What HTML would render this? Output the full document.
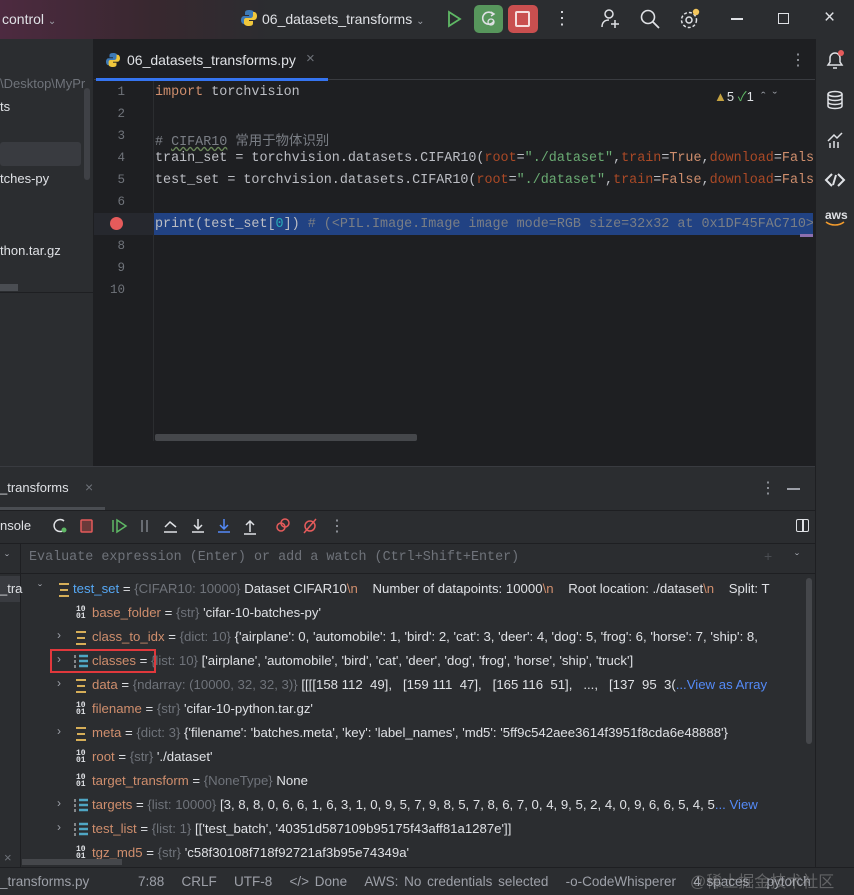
<!DOCTYPE html>
<html><head><meta charset="utf-8"><style>
*{margin:0;padding:0;box-sizing:border-box}
body{width:854px;height:895px;overflow:hidden;background:#1e1f22;font-family:"Liberation Sans","Noto Sans CJK SC",sans-serif;color:#dfe1e5;position:relative}
.a{position:absolute;white-space:nowrap}
.mono{font-family:"Liberation Mono","Noto Sans CJK SC",monospace;font-size:13.4px}
.ln{color:#6f737a;width:30px;text-align:right;left:95px;font-size:12.5px}
.code{left:155px;color:#bcbec4}
.kw{color:#cf8e6d}.par{color:#aa4926}.str{color:#6aab73}.cm{color:#7a7e85}
.row{left:0;font-size:13.2px;color:#dfe1e5}
.n{color:#cf8e6d}.t{color:#6f737a}
.i10{font-size:8px;line-height:7px;color:#dfe1e5;font-family:"Liberation Mono",monospace;font-weight:bold}
.ib{width:10px;height:14px;border-top:2px solid #d6ae58;border-bottom:2px solid #d6ae58}
.chev{color:#9da0a8;font-size:12px}
</style></head><body>
<!-- title bar -->
<div class="a" style="left:0;top:0;width:854px;height:39px;background:linear-gradient(90deg,#4d2a40 0%,#38282f 18%,#2b2d30 32%)"></div>
<div class="a" style="left:2px;top:11px;font-size:14px;color:#dfe1e5">control <span style="font-size:10px;color:#9da0a8">&#8964;</span></div>
<svg class="a" style="left:241px;top:9px" width="16" height="18" viewBox="0 0 16 18"><path d="M8 1c-4 0-4 2-4 3v2h4v1H3c-2 0-3 2-3 4s1 4 3 4h1v-3c0-2 1-3 3-3h4c1 0 2-1 2-2V4c0-2-2-3-5-3z" fill="#3d7ab8"/><path d="M8 17c4 0 4-2 4-3v-2H8v-1h5c2 0 3-2 3-4s-1-4-3-4h-1v3c0 2-1 3-3 3H5c-1 0-2 1-2 2v3c0 2 2 3 5 3z" fill="#f0c73c"/></svg>
<div class="a" style="left:262px;top:11px;font-size:14px">06_datasets_transforms <span style="font-size:10px;color:#9da0a8">&#8964;</span></div>
<svg class="a" style="left:446px;top:10px" width="16" height="18"><path d="M3 2l11 7-11 7z" fill="none" stroke="#5fb865" stroke-width="1.8"/></svg>
<div class="a" style="left:474px;top:5px;width:29px;height:28px;background:#57965c;border-radius:5px"></div>
<svg class="a" style="left:480px;top:10px" width="18" height="18"><path d="M13 4a6 6 0 1 0 1 7" fill="none" stroke="#dfe1e5" stroke-width="1.6"/><path d="M11 2l3 2-3 2" fill="none" stroke="#dfe1e5" stroke-width="1.5"/><circle cx="11" cy="12" r="3" fill="none" stroke="#dfe1e5" stroke-width="1.3"/></svg>
<div class="a" style="left:508px;top:5px;width:30px;height:28px;background:#c94f4f;border-radius:5px"></div>
<div class="a" style="left:515px;top:11px;width:15px;height:16px;border:2px solid #f5dede;border-radius:2px"></div>
<div class="a" style="left:553px;top:8px;font-size:18px;color:#dfe1e5">&#8942;</div>
<svg class="a" style="left:600px;top:8px" width="22" height="22"><circle cx="9" cy="6" r="4" fill="none" stroke="#dfe1e5" stroke-width="1.5"/><path d="M2 19c0-5 3-7 7-7M15 12v8M11 16h8" fill="none" stroke="#dfe1e5" stroke-width="1.5"/></svg>
<svg class="a" style="left:640px;top:9px" width="20" height="20"><circle cx="8" cy="8" r="6.5" fill="none" stroke="#dfe1e5" stroke-width="1.6"/><path d="M13 13l6 6" stroke="#dfe1e5" stroke-width="1.8"/></svg>
<svg class="a" style="left:679px;top:8px" width="22" height="22"><circle cx="10" cy="12" r="3" fill="none" stroke="#dfe1e5" stroke-width="1.5"/><circle cx="10" cy="12" r="7.5" fill="none" stroke="#dfe1e5" stroke-width="1.5" stroke-dasharray="3 2"/><circle cx="17" cy="4" r="3.2" fill="#f2c55c"/></svg>
<div class="a" style="left:731px;top:18px;width:12px;height:1.5px;background:#dfe1e5"></div>
<div class="a" style="left:778px;top:13px;width:11px;height:11px;border:1.5px solid #dfe1e5"></div>
<div class="a" style="left:824px;top:7px;font-size:19px;color:#dfe1e5">&#215;</div>

<!-- left project panel -->
<div class="a" style="left:0;top:39px;width:93px;height:428px;background:#2b2d30"></div>
<div class="a" style="left:0;top:76px;font-size:13px;color:#6f737a">\Desktop\MyPr</div>
<div class="a" style="left:0;top:99px;font-size:13px">ts</div>
<div class="a" style="left:0;top:142px;width:81px;height:24px;background:#393b40;border-radius:3px"></div>
<div class="a" style="left:0;top:171px;font-size:13px">tches-py</div>
<div class="a" style="left:0;top:243px;font-size:13px">thon.tar.gz</div>
<div class="a" style="left:84px;top:88px;width:6px;height:92px;background:#3f4146;border-radius:3px"></div>
<div class="a" style="left:0;top:284px;width:18px;height:7px;background:#4a4d52"></div>
<div class="a" style="left:0;top:292px;width:93px;height:1px;background:#1e1f22"></div>

<!-- editor tab bar -->
<div class="a" style="left:94px;top:39px;width:721px;height:41px;background:#1e1f22;border-bottom:1px solid #393b40"></div>
<svg class="a" style="left:106px;top:52px" width="14" height="16" viewBox="0 0 16 18"><path d="M8 1c-4 0-4 2-4 3v2h4v1H3c-2 0-3 2-3 4s1 4 3 4h1v-3c0-2 1-3 3-3h4c1 0 2-1 2-2V4c0-2-2-3-5-3z" fill="#3d7ab8"/><path d="M8 17c4 0 4-2 4-3v-2H8v-1h5c2 0 3-2 3-4s-1-4-3-4h-1v3c0 2-1 3-3 3H5c-1 0-2 1-2 2v3c0 2 2 3 5 3z" fill="#f0c73c"/></svg>
<div class="a" style="left:127px;top:52px;font-size:14px">06_datasets_transforms.py</div>
<div class="a" style="left:306px;top:50px;font-size:15px;color:#6f737a">&#215;</div>
<div class="a" style="left:96px;top:78px;width:232px;height:3px;background:#3574f0"></div>
<div class="a" style="left:790px;top:50px;font-size:16px;color:#9da0a8">&#8942;</div>

<!-- right strip -->
<div class="a" style="left:815px;top:39px;width:39px;height:828px;background:#2b2d30;border-left:1px solid #1e1f22"></div>
<svg class="a" style="left:824px;top:49px" width="22" height="22"><path d="M4 16h14l-2-3V9a5 5 0 0 0-10 0v4z M9 19h4" fill="none" stroke="#dfe1e5" stroke-width="1.5"/><circle cx="17" cy="4" r="3" fill="#e55b5b"/></svg>
<svg class="a" style="left:826px;top:90px" width="18" height="20"><ellipse cx="9" cy="4" rx="7" ry="2.5" fill="none" stroke="#dfe1e5" stroke-width="1.5"/><path d="M2 4v12c0 1.5 3 2.5 7 2.5s7-1 7-2.5V4M2 8c0 1.5 3 2.5 7 2.5s7-1 7-2.5M2 12c0 1.5 3 2.5 7 2.5s7-1 7-2.5" fill="none" stroke="#dfe1e5" stroke-width="1.5"/></svg>
<svg class="a" style="left:826px;top:131px" width="18" height="18"><path d="M2 10l6-6 3 3 5-5M4 17v-5M8 17v-7M12 17v-6" fill="none" stroke="#dfe1e5" stroke-width="1.5"/></svg>
<svg class="a" style="left:824px;top:171px" width="22" height="18"><path d="M8 3L2 9l6 6M14 3l6 6-6 6M12 4l-3 10" fill="none" stroke="#dfe1e5" stroke-width="2"/></svg>
<div class="a" style="left:825px;top:208px;font-size:12px;font-weight:bold;color:#dfe1e5">aws</div>
<svg class="a" style="left:824px;top:221px" width="22" height="6"><path d="M2 1c5 4 13 4 18 0" fill="none" stroke="#f29b2d" stroke-width="1.6"/></svg>

<!-- editor gutter & code -->
<div class="a" style="left:153px;top:81px;width:1px;height:360px;background:#2b2d30"></div>
<div class="a" style="left:94px;top:213px;width:60px;height:22px;background:#26282e"></div>
<div class="a" style="left:154px;top:213px;width:659px;height:22px;background:#214283"></div>
<div class="a" style="left:800px;top:234px;width:13px;height:3px;background:#8c6fae"></div>
<div class="a" style="left:110px;top:217px;width:13px;height:13px;border-radius:50%;background:#e55b5b"></div>
<div class="a mono ln" style="top:85px">1</div>
<div class="a mono ln" style="top:107px">2</div>
<div class="a mono ln" style="top:129px">3</div>
<div class="a mono ln" style="top:151px">4</div>
<div class="a mono ln" style="top:173px">5</div>
<div class="a mono ln" style="top:195px">6</div>
<div class="a mono ln" style="top:239px">8</div>
<div class="a mono ln" style="top:261px">9</div>
<div class="a mono ln" style="top:283px">10</div>
<div class="a mono code" style="top:85px"><span class="kw">import</span> torchvision</div>
<div class="a mono code" style="top:129px;color:#7a7e85"># <span style="text-decoration:underline wavy #6a8759">CIFAR10</span> 常用于物体识别</div>
<div class="a mono code" style="top:151px;width:658px;overflow:hidden">train_set = torchvision.datasets.CIFAR10(<span class="par">root</span>=<span class="str">"./dataset"</span>,<span class="par">train</span>=<span class="kw">True</span>,<span class="par">download</span>=<span class="kw">False</span>)</div>
<div class="a mono code" style="top:173px;width:658px;overflow:hidden">test_set = torchvision.datasets.CIFAR10(<span class="par">root</span>=<span class="str">"./dataset"</span>,<span class="par">train</span>=<span class="kw">False</span>,<span class="par">download</span>=<span class="kw">False</span>)</div>
<div class="a mono code" style="top:217px;width:658px;overflow:hidden"><span style="color:#bcbec4">print(test_set[<span style="color:#2aacb8">0</span>])</span>  <span class="cm"># (&lt;PIL.Image.Image image mode=RGB size=32x32 at 0x1DF45FAC710&gt;</span></div>
<div class="a" style="left:714px;top:86px;font-size:13px;color:#dfe1e5"><span style="color:#c4a241">&#9650;</span>5 <span style="color:#5fb865">&#10003;</span>1 &nbsp;<span style="color:#9da0a8">&#710; &nbsp;&#711;</span></div>
<div class="a" style="left:155px;top:434px;width:262px;height:7px;background:#45474b;border-radius:2px"></div>
<div class="a" style="left:94px;top:441px;width:721px;height:26px;background:#1e1f22"></div>
<div class="a" style="left:0;top:466px;width:815px;height:1px;background:#393b40"></div>

<!-- debug panel -->
<div class="a" style="left:0;top:467px;width:815px;height:400px;background:#2b2d30"></div>
<div class="a" style="left:0;top:480px;font-size:13px">_transforms</div>
<div class="a" style="left:85px;top:479px;font-size:14px;color:#6f737a">&#215;</div>
<div class="a" style="left:0;top:507px;width:105px;height:3px;background:#4a4d52"></div>
<div class="a" style="left:0;top:510px;width:815px;height:1px;background:#1e1f22"></div>
<div class="a" style="left:760px;top:478px;font-size:16px;color:#9da0a8">&#8942;</div>
<div class="a" style="left:787px;top:488px;width:13px;height:1.5px;background:#9da0a8"></div>
<div class="a" style="left:0;top:518px;font-size:13px">nsole</div>
<svg class="a" style="left:52px;top:516px;" width="240" height="20"><path d="M12 5a6 6 0 1 0 1 8" fill="none" stroke="#dfe1e5" stroke-width="1.5"/><circle cx="12" cy="14" r="2.5" fill="#5fb865"/><rect x="29" y="4" width="11" height="12" rx="1" fill="#6a3a3a" stroke="#e55b5b" stroke-width="1.5"/><path d="M61 4v12M65 4l9 6-9 6z" fill="none" stroke="#5fb865" stroke-width="1.5"/><path d="M90 4v12M95 4v12" stroke="#6f737a" stroke-width="1.8"/><path d="M113 11l5-5 6 5M112 16h13" fill="none" stroke="#dfe1e5" stroke-width="1.5"/><path d="M146 3v10M142 9l4 4 4-4M140 16h12" fill="none" stroke="#dfe1e5" stroke-width="1.5"/><path d="M172 3v10M168 9l4 4 4-4M166 16h12" fill="none" stroke="#548af7" stroke-width="1.5"/><path d="M198 16V5M194 9l4-4 4 4M192 18h12" fill="none" stroke="#dfe1e5" stroke-width="1.5"/><circle cx="229" cy="11" r="4" fill="none" stroke="#e55b5b" stroke-width="1.5"/><circle cx="233" cy="7" r="4" fill="none" stroke="#e55b5b" stroke-width="1.5"/></svg>
<svg class="a" style="left:300px;top:516px" width="24" height="20"><circle cx="10" cy="10" r="5" fill="none" stroke="#e55b5b" stroke-width="1.5"/><path d="M4 17L16 3" stroke="#e55b5b" stroke-width="1.5"/></svg>
<div class="a" style="left:329px;top:516px;font-size:16px;color:#9da0a8">&#8942;</div>
<div class="a" style="left:796px;top:519px;width:13px;height:13px;border:1.5px solid #dfe1e5;border-radius:2px"></div>
<div class="a" style="left:802px;top:519px;width:1.5px;height:13px;background:#dfe1e5"></div>
<div class="a" style="left:0;top:543px;width:815px;height:1px;background:#1e1f22"></div>
<div class="a" style="left:20px;top:544px;width:1px;height:323px;background:#1e1f22"></div>
<div class="a" style="left:5px;top:552px;font-size:12px;color:#9da0a8">&#711;</div>
<div class="a mono" style="left:29px;top:550px;color:#6f737a">Evaluate expression (Enter) or add a watch (Ctrl+Shift+Enter)</div>
<div class="a" style="left:764px;top:548px;font-size:14px;color:#4a4d52">+</div>
<div class="a" style="left:795px;top:551px;font-size:12px;color:#9da0a8">&#711;</div>
<div class="a" style="left:0;top:573px;width:815px;height:1px;background:#1e1f22"></div>
<div class="a" style="left:0;top:576px;width:20px;height:26px;background:#393b40"></div>
<div class="a" style="left:0;top:581px;font-size:13px">_tra</div>
<div class="a" style="left:806px;top:578px;width:6px;height:166px;background:#45474b;border-radius:3px"></div>

<div class="a row" style="left:38px;top:581px"><span class="chev">&#711;</span></div>
<div class="a ib" style="left:59px;top:583px"></div><div class="a" style="left:60px;top:589px;width:8px;height:2px;background:#d6ae58"></div>
<div class="a row" style="left:73px;top:581px;width:732px;overflow:hidden"><span style="color:#56a8f5">test_set</span> = <span class="t">{CIFAR10: 10000}</span> Dataset CIFAR10<span class="n">\n</span> &nbsp;&nbsp;&nbsp;Number of datapoints: 10000<span class="n">\n</span> &nbsp;&nbsp;&nbsp;Root location: ./dataset<span class="n">\n</span> &nbsp;&nbsp;&nbsp;Split: T</div>

<div class="a i10" style="left:76px;top:606px">10<br>01</div>
<div class="a row" style="left:92px;top:605px"><span class="n">base_folder</span> = <span class="t">{str}</span> 'cifar-10-batches-py'</div>

<div class="a chev" style="left:57px;top:628px">&#8250;</div>
<div class="a ib" style="left:76px;top:631px"></div><div class="a" style="left:77px;top:637px;width:8px;height:2px;background:#d6ae58"></div>
<div class="a row" style="left:92px;top:629px;width:720px;overflow:hidden"><span class="n">class_to_idx</span> = <span class="t">{dict: 10}</span> {'airplane': 0, 'automobile': 1, 'bird': 2, 'cat': 3, 'deer': 4, 'dog': 5, 'frog': 6, 'horse': 7, 'ship': 8,</div>

<div class="a" style="left:50px;top:649px;width:106px;height:24px;border:2px solid #e0383c"></div>
<div class="a chev" style="left:57px;top:652px">&#8250;</div>
<svg class="a" style="left:74px;top:654px" width="14" height="14"><path d="M5 2h9M5 7h9M5 12h9" stroke="#4fa6c4" stroke-width="2.5"/><path d="M1 1v3M1 6v3M1 11v3" stroke="#dfe1e5" stroke-width="1"/></svg>
<div class="a row" style="left:92px;top:653px"><span class="n">classes</span> = <span class="t">{list: 10}</span> ['airplane', 'automobile', 'bird', 'cat', 'deer', 'dog', 'frog', 'horse', 'ship', 'truck']</div>

<div class="a chev" style="left:57px;top:676px">&#8250;</div>
<div class="a ib" style="left:76px;top:679px"></div><div class="a" style="left:77px;top:685px;width:8px;height:2px;background:#d6ae58"></div>
<div class="a row" style="left:92px;top:677px;width:720px;overflow:hidden"><span class="n">data</span> = <span class="t">{ndarray: (10000, 32, 32, 3)}</span> [[[[158 112 &nbsp;49], &nbsp;&nbsp;[159 111 &nbsp;47], &nbsp;&nbsp;[165 116 &nbsp;51], &nbsp;&nbsp;..., &nbsp;&nbsp;[137 &nbsp;95 &nbsp;3(<span style="color:#548af7">...View as Array</span></div>

<div class="a i10" style="left:76px;top:702px">10<br>01</div>
<div class="a row" style="left:92px;top:701px"><span class="n">filename</span> = <span class="t">{str}</span> 'cifar-10-python.tar.gz'</div>

<div class="a chev" style="left:57px;top:724px">&#8250;</div>
<div class="a ib" style="left:76px;top:727px"></div><div class="a" style="left:77px;top:733px;width:8px;height:2px;background:#d6ae58"></div>
<div class="a row" style="left:92px;top:725px"><span class="n">meta</span> = <span class="t">{dict: 3}</span> {'filename': 'batches.meta', 'key': 'label_names', 'md5': '5ff9c542aee3614f3951f8cda6e48888'}</div>

<div class="a i10" style="left:76px;top:750px">10<br>01</div>
<div class="a row" style="left:92px;top:749px"><span class="n">root</span> = <span class="t">{str}</span> './dataset'</div>

<div class="a i10" style="left:76px;top:774px">10<br>01</div>
<div class="a row" style="left:92px;top:773px"><span class="n">target_transform</span> = <span class="t">{NoneType}</span> None</div>

<div class="a chev" style="left:57px;top:796px">&#8250;</div>
<svg class="a" style="left:74px;top:798px" width="14" height="14"><path d="M5 2h9M5 7h9M5 12h9" stroke="#4fa6c4" stroke-width="2.5"/><path d="M1 1v3M1 6v3M1 11v3" stroke="#dfe1e5" stroke-width="1"/></svg>
<div class="a row" style="left:92px;top:797px;width:720px;overflow:hidden"><span class="n">targets</span> = <span class="t">{list: 10000}</span> [3, 8, 8, 0, 6, 6, 1, 6, 3, 1, 0, 9, 5, 7, 9, 8, 5, 7, 8, 6, 7, 0, 4, 9, 5, 2, 4, 0, 9, 6, 6, 5, 4, 5<span style="color:#548af7">... View</span></div>

<div class="a chev" style="left:57px;top:820px">&#8250;</div>
<svg class="a" style="left:74px;top:822px" width="14" height="14"><path d="M5 2h9M5 7h9M5 12h9" stroke="#4fa6c4" stroke-width="2.5"/><path d="M1 1v3M1 6v3M1 11v3" stroke="#dfe1e5" stroke-width="1"/></svg>
<div class="a row" style="left:92px;top:821px"><span class="n">test_list</span> = <span class="t">{list: 1}</span> [['test_batch', '40351d587109b95175f43aff81a1287e']]</div>

<div class="a i10" style="left:76px;top:846px">10<br>01</div>
<div class="a row" style="left:92px;top:845px"><span class="n">tgz_md5</span> = <span class="t">{str}</span> 'c58f30108f718f92721af3b95e74349a'</div>
<div class="a" style="left:4px;top:850px;font-size:13px;color:#6f737a">&#215;</div>
<div class="a" style="left:22px;top:859px;width:100px;height:6px;background:#45474b"></div>

<!-- status bar -->
<div class="a" style="left:0;top:867px;width:854px;height:28px;background:#2b2d30;border-top:1px solid #1e1f22"></div>
<div class="a" style="left:0;top:874px;font-size:13.5px;color:#9da0a8">_transforms.py</div>
<div class="a" style="left:138px;top:874px;font-size:13.5px;color:#9da0a8;word-spacing:2px">7:88 &nbsp;&nbsp;CRLF &nbsp;&nbsp;UTF-8 &nbsp;&nbsp;&lt;/&gt; Done &nbsp;&nbsp;AWS: No credentials selected &nbsp;&nbsp;-o-CodeWhisperer &nbsp;&nbsp;4 spaces &nbsp;&nbsp;pytorch</div>
<div class="a" style="left:690px;top:868px;font-size:16px;color:rgba(200,200,200,0.35)">@稀土掘金技术社区</div>
</body></html>
